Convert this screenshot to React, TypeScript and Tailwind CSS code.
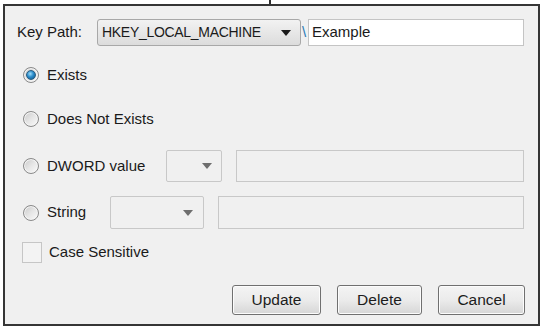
import React from "react";

const font = { fontFamily: '"Liberation Sans", Arial, sans-serif' };

function Radio({ checked }: { checked?: boolean }) {
  return (
    <span className="flex h-[16px] w-[16px] shrink-0 items-center justify-center rounded-full border border-[#8a8a8a] bg-gradient-to-br from-[#c9c9c9] via-[#e6e6e6] to-[#fbfbfb] shadow-[inset_0_0_0_1px_#f4f4f4]">
      {checked && (
        <span className="h-[10px] w-[10px] rounded-full border border-[#2b5d80] bg-[radial-gradient(circle_at_40%_35%,#9fdcf8_0%,#2a8ccb_45%,#0b4f82_100%)]" />
      )}
    </span>
  );
}

function Caret({ color = "#1a1a1a" }: { color?: string }) {
  return (
    <svg width="10" height="6" viewBox="0 0 10 6" className="shrink-0">
      <path d="M0 0 L10 0 L5 6 Z" fill={color} />
    </svg>
  );
}

function Btn({ label, w }: { label: string; w: string }) {
  return (
    <button
      className={`${w} h-[30px] rounded-[3px] border border-[#707070] bg-gradient-to-b from-[#f4f4f4] via-[#ebebeb] to-[#d6d6d6] text-[15.5px] text-[#1c1c1c] shadow-[inset_0_0_0_1px_#fcfcfc]`}
      style={font}
    >
      {label}
    </button>
  );
}

export default function App() {
  return (
    <div className="h-[329px] w-[545px] overflow-hidden bg-white pl-[3px]" style={font}>
      <div className="ml-[266px] h-[4px] w-[2px] bg-[#2e2e2e]" />
      <div className="flex h-[322px] w-[537px] flex-col border-2 border-[#353535] bg-[#f0f0f0] text-[15px] text-[#1a1a1a]">
        {/* key path */}
        <div className="mt-[13px] flex h-[27px] items-center pl-[12px]">
          <span className="w-[80px]">Key Path:</span>
          <div className="flex h-[27px] w-[204px] items-center justify-between rounded-[3px] border border-[#a8a8a8] bg-gradient-to-b from-[#f2f2f2] to-[#dcdcdc] pl-[4px] pr-[9px]">
            <span className="text-[14px] tracking-[-0.3px]">HKEY_LOCAL_MACHINE</span>
            <Caret />
          </div>
          <span className="w-[7px] pl-[1px] text-[#2a7ab4]">\</span>
          <div className="flex h-[27px] w-[216px] items-center border border-[#c4c4c4] bg-white pl-[3px]">
            Example
          </div>
        </div>

        {/* exists */}
        <div className="mt-[19px] flex h-[20px] items-center gap-[8px] pl-[18px]">
          <Radio checked />
          <span>Exists</span>
        </div>

        {/* does not exist */}
        <div className="mt-[24px] flex h-[20px] items-center gap-[8px] pl-[18px]">
          <Radio />
          <span>Does Not Exists</span>
        </div>

        {/* dword */}
        <div className="mt-[21px] flex h-[32px] items-center pl-[18px]">
          <Radio />
          <span className="ml-[8px] w-[119px]">DWORD value</span>
          <div className="flex h-[32px] w-[56px] items-center justify-end rounded-[2px] border border-[#c8c8c8] bg-[#f0f0f0] pr-[9px]">
            <Caret color="#6e6e6e" />
          </div>
          <div className="ml-[14px] h-[32px] w-[288px] border border-[#c8c8c8] bg-[#f0f0f0]" />
        </div>

        {/* string */}
        <div className="mt-[14px] flex h-[33px] items-center pl-[18px]">
          <Radio />
          <span className="ml-[8px] w-[63px]">String</span>
          <div className="flex h-[33px] w-[94px] items-center justify-end rounded-[2px] border border-[#c8c8c8] bg-[#f0f0f0] pr-[10px]">
            <Caret color="#6e6e6e" />
          </div>
          <div className="ml-[14px] h-[33px] w-[306px] border border-[#c8c8c8] bg-[#f0f0f0]" />
        </div>

        {/* case sensitive */}
        <div className="mt-[13px] flex h-[21px] items-center pl-[17px]">
          <span className="h-[21px] w-[20px] border border-[#c6c6c6] bg-[#f3f3f3]" />
          <span className="ml-[7px]">Case Sensitive</span>
        </div>

        {/* buttons */}
        <div className="mt-[22px] flex justify-end gap-[16px] pr-[13px]">
          <Btn label="Update" w="w-[89px]" />
          <Btn label="Delete" w="w-[85px]" />
          <Btn label="Cancel" w="w-[87px]" />
        </div>
      </div>
    </div>
  );
}
